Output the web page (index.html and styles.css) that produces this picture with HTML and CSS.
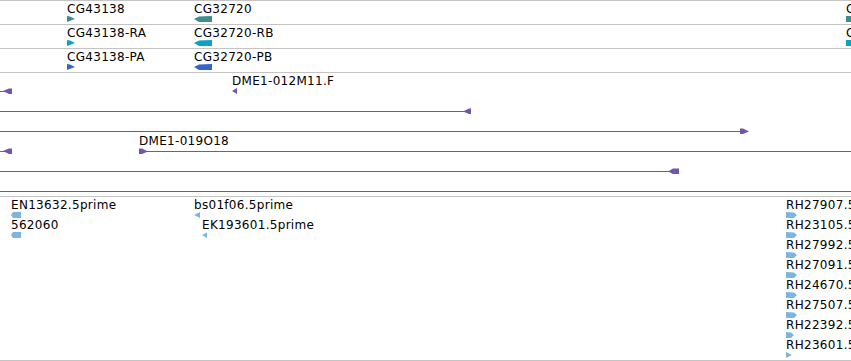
FILE: index.html
```html
<!DOCTYPE html>
<html>
<head>
<meta charset="utf-8">
<link rel="stylesheet" href="styles.css">
</head>
<body>
<div class="panel">
  <div class="track gene">
    <div class="feat" style="left:67px"><span class="lbl">CG43138</span><svg class="g" width="8" height="6" viewBox="0 0 8 6"><polygon class="c1" points="0,0 3,0.5 8,3 0,6"/></svg></div>
    <div class="feat" style="left:194px"><span class="lbl">CG32720</span><svg class="g" width="18" height="6" viewBox="0 0 18 6"><polygon class="c1" points="0,3 5,0.5 18,0 18,6 5,6"/></svg></div>
    <div class="feat" style="left:846px"><span class="lbl">CG32720</span><svg class="g" width="8" height="6" viewBox="0 0 8 6"><rect class="c1" x="0" y="0" width="8" height="6"/></svg></div>
  </div>
  <div class="track gene">
    <div class="feat" style="left:67px"><span class="lbl">CG43138-RA</span><svg class="g" width="8" height="6" viewBox="0 0 8 6"><polygon class="c2" points="0,0 3,0.5 8,3 0,6"/></svg></div>
    <div class="feat" style="left:194px"><span class="lbl">CG32720-RB</span><svg class="g" width="18" height="6" viewBox="0 0 18 6"><polygon class="c2" points="0,3 5,0.5 18,0 18,6 5,6"/></svg></div>
    <div class="feat" style="left:846px"><span class="lbl">CG32720-RC</span><svg class="g" width="8" height="6" viewBox="0 0 8 6"><rect class="c2" x="0" y="0" width="8" height="6"/></svg></div>
  </div>
  <div class="track gene">
    <div class="feat" style="left:67px"><span class="lbl">CG43138-PA</span><svg class="g" width="8" height="6" viewBox="0 0 8 6"><polygon class="c3" points="0,0 3,0.5 8,3 0,6"/></svg></div>
    <div class="feat" style="left:194px"><span class="lbl">CG32720-PB</span><svg class="g" width="18" height="6" viewBox="0 0 18 6"><polygon class="c3" points="0,3 5,0.5 18,0 18,6 5,6"/></svg></div>
  </div>

  <div class="track clones">
    <div class="feat" style="left:0;top:15px"><svg class="g" width="12" height="6" viewBox="0 0 12 6"><line class="ln" x1="0" y1="3.5" x2="6" y2="3.5"/><polygon class="cp" points="3,3 9,0.5 12,0.5 12,6 9,6"/></svg></div>
    <div class="feat" style="left:232px;top:1px"><span class="lbl">DME1-012M11.F</span><svg class="g" width="5" height="6" viewBox="0 0 5 6"><polygon class="cp" points="0,3 5,0 5,6"/></svg></div>

    <div class="feat" style="left:0;top:35px"><svg class="g" width="472" height="6" viewBox="0 0 472 6"><line class="ln" x1="0" y1="3.5" x2="466" y2="3.5"/><polygon class="cp" points="463,3.5 469,0.5 471,0.5 471,6 469,6"/></svg></div>

    <div class="feat" style="left:0;top:55px"><svg class="g" width="750" height="6" viewBox="0 0 750 6"><line class="ln" x1="0" y1="3.5" x2="742" y2="3.5"/><polygon class="cp" points="740,0.5 743,0.5 749,3.5 743,6 740,6"/></svg></div>

    <div class="feat" style="left:0;top:75px"><svg class="g" width="12" height="6" viewBox="0 0 12 6"><line class="ln" x1="0" y1="3.5" x2="6" y2="3.5"/><polygon class="cp" points="3,3 9,0.5 12,0.5 12,6 9,6"/></svg></div>
    <div class="feat" style="left:139px;top:61px"><span class="lbl">DME1-019O18</span><svg class="g" width="712" height="6" viewBox="0 0 712 6"><line class="ln" x1="0" y1="3.5" x2="712" y2="3.5"/><polygon class="cp" points="0,0.5 3,0.5 9,3.5 3,6 0,6"/></svg></div>

    <div class="feat" style="left:0;top:95px"><svg class="g" width="680" height="6" viewBox="0 0 680 6"><line class="ln" x1="0" y1="3.5" x2="672" y2="3.5"/><polygon class="cp" points="668,3.5 673,0.5 679,0.5 679,6 673,6"/></svg></div>

    <div class="feat" style="left:0;top:115px"><svg class="g" width="851" height="6" viewBox="0 0 851 6"><line class="ln" x1="0" y1="3.5" x2="851" y2="3.5"/></svg></div>
  </div>

  <div class="track ests">
    <div class="feat" style="left:11px;top:1px"><span class="lbl">EN13632.5prime</span><svg class="g" width="10" height="6" viewBox="0 0 10 6"><polygon class="ce" points="0,3 2,0 10,0 10,6 2,6"/></svg></div>
    <div class="feat" style="left:11px;top:21px"><span class="lbl">562060</span><svg class="g" width="10" height="6" viewBox="0 0 10 6"><polygon class="ce" points="0,3 2,0 10,0 10,6 2,6"/></svg></div>
    <div class="feat" style="left:194px;top:1px"><span class="lbl">bs01f06.5prime</span><svg class="g" width="6" height="6" viewBox="0 0 6 6"><polygon class="ce" points="0,3 6,0 6,6"/></svg></div>
    <div class="feat" style="left:202px;top:21px"><span class="lbl">EK193601.5prime</span><svg class="g" width="6" height="6" viewBox="0 0 6 6"><polygon class="ce" points="0,3 5,0.5 5,6"/></svg></div>

    <div class="feat" style="left:786px;top:1px"><span class="lbl">RH27907.5prime</span><svg class="g" width="11" height="6" viewBox="0 0 11 6"><polygon class="ce" points="0,0 8,0.5 11,3 8,6 0,6"/></svg></div>
    <div class="feat" style="left:786px;top:21px"><span class="lbl">RH23105.5prime</span><svg class="g" width="11" height="6" viewBox="0 0 11 6"><polygon class="ce" points="0,0 8,0.5 11,3 8,6 0,6"/></svg></div>
    <div class="feat" style="left:786px;top:41px"><span class="lbl">RH27992.5prime</span><svg class="g" width="11" height="6" viewBox="0 0 11 6"><polygon class="ce" points="0,0 8,0.5 11,3 8,6 0,6"/></svg></div>
    <div class="feat" style="left:786px;top:61px"><span class="lbl">RH27091.5prime</span><svg class="g" width="11" height="6" viewBox="0 0 11 6"><polygon class="ce" points="0,0 8,0.5 11,3 8,6 0,6"/></svg></div>
    <div class="feat" style="left:786px;top:81px"><span class="lbl">RH24670.5prime</span><svg class="g" width="11" height="6" viewBox="0 0 11 6"><polygon class="ce" points="0,0 8,0.5 11,3 8,6 0,6"/></svg></div>
    <div class="feat" style="left:786px;top:101px"><span class="lbl">RH27507.5prime</span><svg class="g" width="11" height="6" viewBox="0 0 11 6"><polygon class="ce" points="0,0 8,0.5 11,3 8,6 0,6"/></svg></div>
    <div class="feat" style="left:786px;top:121px"><span class="lbl">RH22392.5prime</span><svg class="g" width="8" height="6" viewBox="0 0 8 6"><polygon class="ce" points="0,0 5,0.5 8,3 5,6 0,6"/></svg></div>
    <div class="feat" style="left:786px;top:141px"><span class="lbl">RH23601.5prime</span><svg class="g" width="6" height="6" viewBox="0 0 6 6"><polygon class="ce" points="0,0 6,3 0,6"/></svg></div>
  </div>
</div>
</body>
</html>
```

FILE: styles.css
```css
html, body {
  margin: 0;
  padding: 0;
  background: #ffffff;
}

body {
  font-family: "DejaVu Sans", sans-serif;
  font-size: 12px;
  color: #000000;
  width: 851px;
  height: 361px;
  overflow: hidden;
}

.panel {
  border-top: 1px solid #c4c4c4;
}

.track {
  position: relative;
  overflow: hidden;
  border-bottom: 1px solid #c4c4c4;
}

.gene {
  height: 23px;
}

.clones {
  height: 123px;
}

.ests {
  height: 163px;
}

.feat {
  position: absolute;
  top: 1px;
  white-space: nowrap;
}

.lbl {
  display: block;
  line-height: 14px;
  height: 14px;
  letter-spacing: 0.3px;
}

.g {
  display: block;
}

.c1 { fill: #3d8c8e; }
.c2 { fill: #0aa3c4; }
.c3 { fill: #3366cc; }
.cp { fill: #7455aa; }
.ce { fill: #7cb5e0; }

.ln {
  stroke: #7455aa;
  stroke-width: 1;
}
```
